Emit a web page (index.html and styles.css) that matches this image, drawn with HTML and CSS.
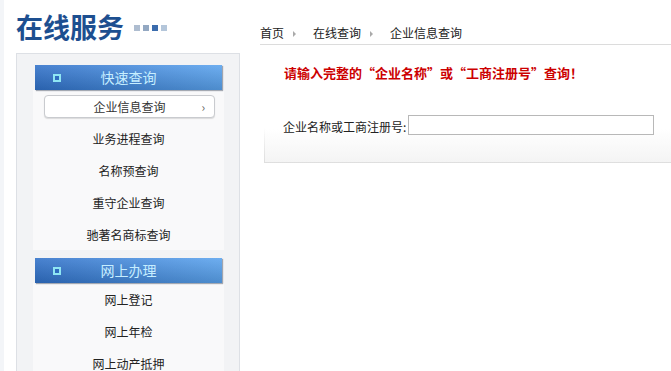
FILE: index.html
```html
<!DOCTYPE html>
<html lang="zh-CN">
<head>
<meta charset="utf-8">
<title>在线服务</title>
<link rel="stylesheet" href="styles.css">
</head>
<body>
<div class="page">
  <aside class="side">
    <h1 class="title">在线服务<span class="dots"><i class="d1"></i><i class="d2"></i><i class="d3"></i><i class="d4"></i></span></h1>
    <div class="menu">
      <div class="group">
        <div class="bar"><span class="ico"></span>快速查询</div>
        <ul class="items">
          <li class="item active"><span class="pill">企业信息查询<span class="chev">›</span></span></li>
          <li class="item">业务进程查询</li>
          <li class="item">名称预查询</li>
          <li class="item">重守企业查询</li>
          <li class="item">驰著名商标查询</li>
        </ul>
      </div>
      <div class="group">
        <div class="bar"><span class="ico"></span>网上办理</div>
        <ul class="items">
          <li class="item">网上登记</li>
          <li class="item">网上年检</li>
          <li class="item">网上动产抵押</li>
        </ul>
      </div>
    </div>
  </aside>
  <main class="main">
    <div class="crumb">
      <span>首页</span><span class="arr"></span><span>在线查询</span><span class="arr"></span><span>企业信息查询</span>
    </div>
    <div class="panel">
      <p class="notice">请输入完整的“企业名称”或“工商注册号”查询！</p>
      <div class="row">
        <label class="lbl" for="q">企业名称或工商注册号:</label>
        <input class="inp" id="q" type="text">
      </div>
    </div>
  </main>
</div>
</body>
</html>
```

FILE: styles.css
```css
html, body {
  margin: 0;
  padding: 0;
  background: #fff;
}
body {
  font-family: "Noto Sans CJK SC", "Noto Sans", sans-serif;
  color: #222;
  font-size: 12px;
  overflow: hidden;
  height: 371px;
  border-left: 4px solid #f3f5f8;
  box-sizing: border-box;
}
.page {
  display: flex;
  padding-left: 12px;
  gap: 20px;
  height: 371px;
  overflow: hidden;
}
.side {
  width: 224px;
  flex: none;
}
.title {
  margin: 0;
  padding-top: 11px;
  height: 42px;
  box-sizing: border-box;
  font-size: 27px;
  line-height: 30px;
  font-weight: bold;
  color: #1d4f90;
  display: flex;
  align-items: center;
}
.dots {
  display: flex;
  gap: 3px;
  margin-left: 10px;
  margin-top: 2px;
}
.dots i {
  width: 6px;
  height: 6px;
  display: block;
}
.d1 { background: #aebdd0; }
.d2 { background: #93a8c2; }
.d3 { background: #3b6cad; }
.d4 { background: #b4c6da; }

.menu {
  margin-top: 11px;
  border: 1px solid #dde0e5;
  background: #f2f3f5;
  padding: 11px 15px 0 16px;
}
.group {
  margin-bottom: 8px;
}
.bar {
  margin: 0 2px;
  height: 25px;
  line-height: 25px;
  position: relative;
  text-align: center;
  font-size: 14px;
  color: #c6eeff;
  background:
    linear-gradient(to bottom, rgba(255,255,255,0.12), rgba(0,0,0,0.14)),
    linear-gradient(to right, #3071c9, #5aa3ee);
  box-shadow: 1px 1px 1px rgba(60,70,90,0.45);
}
.ico {
  position: absolute;
  left: 18px;
  top: 9px;
  width: 4px;
  height: 4px;
  border: 2px solid #8fe6f3;
  background: #2f6cbf;
}
.items {
  list-style: none;
  margin: 0;
  padding: 0;
  background: #f9f9fa;
}
.item {
  height: 32px;
  display: flex;
  align-items: center;
  justify-content: center;
  color: #222;
  font-size: 12px;
}
.item.active {
  padding: 0 9px 0 11px;
  justify-content: stretch;
}
.pill {
  flex: 1;
  height: 21px;
  line-height: 21px;
  background: #fff;
  border: 1px solid #c9cbcf;
  border-radius: 4px;
  box-shadow: 0 1px 1px rgba(0,0,0,0.12);
  text-align: center;
  position: relative;
  color: #333;
}
.chev {
  position: absolute;
  right: 9px;
  top: 0;
  color: #666;
  font-size: 12px;
}

.main {
  flex: 1;
  min-width: 0;
}
.crumb {
  padding-top: 25px;
  padding-bottom: 3px;
  line-height: 16px;
  border-bottom: 1px solid #dcdcdc;
  display: flex;
  align-items: center;
  color: #222;
}
.arr {
  width: 0;
  height: 0;
  border-top: 3px solid transparent;
  border-bottom: 3px solid transparent;
  border-left: 3px solid #aaa;
  margin: 2px 17px 0 9px;
}
.panel {
  margin-left: 4px;
  padding: 19px 0 27px 20px;
  border-bottom: 1px solid #dedede;
  border-left: 1px solid transparent;
  border-image: linear-gradient(to bottom, rgba(222,222,222,0) 0, rgba(222,222,222,0) 70%, #dedede 100%) 1;
  background: linear-gradient(to bottom, #fff 0, #fff 72%, #f4f4f4 100%);
}
.notice {
  margin: 0 0 0 -1px;
  line-height: 18px;
  font-size: 13px;
  font-weight: bold;
  color: #cc0000;
}
.row {
  margin-top: 33px;
  display: flex;
  align-items: center;
}
.lbl {
  font-size: 12px;
  color: #222;
  margin-top: 3px;
  margin-left: -2px;
}
.inp {
  margin: 0 0 0 2px;
  width: 246px;
  height: 20px;
  box-sizing: border-box;
  border: 1px solid #b8b8b8;
  padding: 0 3px;
  background: #fff;
}
```
